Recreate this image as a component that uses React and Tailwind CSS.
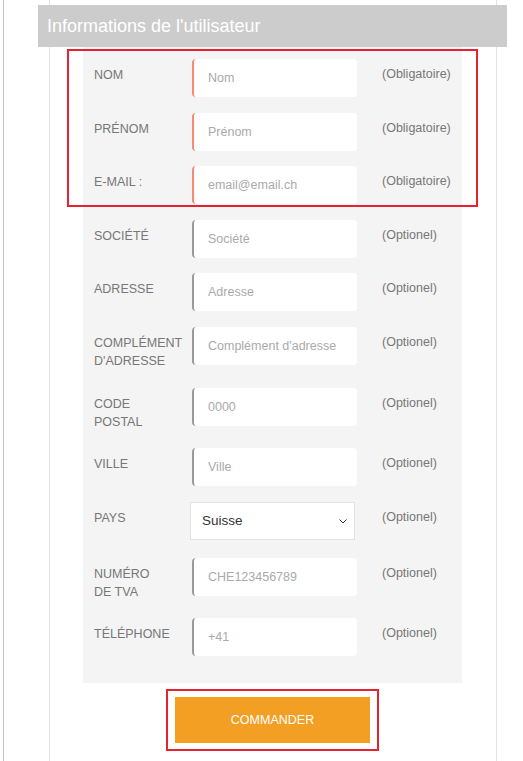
import { useState } from "react";

const requiredFields = [
  { label: ["NOM"], placeholder: "Nom" },
  { label: ["PRÉNOM"], placeholder: "Prénom" },
  { label: ["E-MAIL :"], placeholder: "email@email.ch" },
];

const optionalFields = [
  { label: ["SOCIÉTÉ"], placeholder: "Société" },
  { label: ["ADRESSE"], placeholder: "Adresse" },
  { label: ["COMPLÉMENT", "D'ADRESSE"], placeholder: "Complément d'adresse" },
  { label: ["CODE", "POSTAL"], placeholder: "0000" },
  { label: ["VILLE"], placeholder: "Ville" },
];

const lastFields = [
  { label: ["NUMÉRO", "DE TVA"], placeholder: "CHE123456789" },
  { label: ["TÉLÉPHONE"], placeholder: "+41" },
];

const Label = ({ lines }) => (
  <div className="w-[98px] shrink-0 pt-[7px] pb-[2px] leading-[18px] text-[#777]">
    {lines.map((l) => (
      <div key={l}>{l}</div>
    ))}
  </div>
);

const Note = ({ required }) => (
  <div className="ml-[25px] pt-[6px] leading-[18px] text-[#777]">
    {required ? "(Obligatoire)" : "(Optionel)"}
  </div>
);

const Field = ({ field, required }) => (
  <div className="flex items-start mb-[15.6px]">
    <Label lines={field.label} />
    <input
      type="text"
      placeholder={field.placeholder}
      className={`w-[165px] h-[38px] shrink-0 rounded-[4px] bg-white border-l-2 pl-[14px] text-[#333] outline-none placeholder:text-[#aaa] ${
        required ? "border-[#f58a78]" : "border-[#9a9a9a]"
      }`}
    />
    <Note required={required} />
  </div>
);

export default function App() {
  const [pays, setPays] = useState("Suisse");

  return (
    <div
      className="h-[761px] bg-white pl-[3px] text-[12.5px]"
      style={{ fontFamily: '"Liberation Sans", Arial, sans-serif' }}
    >
      <div className="h-full border-l border-[#c2c2c2]">
        <div className="ml-[45px] w-[448px] h-full border-x border-[#e4e4e4] pt-[5px]">
          <div className="-ml-[12px] -mr-[11px] h-[42px] bg-[#cccccc] pl-[9px] flex items-center text-[18px] text-white">
            Informations de l'utilisateur
          </div>

          <div className="relative ml-[33px] w-[379px] bg-[#f4f4f4] pl-[11px] pt-[12px] pb-[11px]">
            {/* annotation box */}
            <div className="absolute top-[2px] -left-[16px] w-[411px] h-[158px] border-2 border-[#e5222d] pointer-events-none" />

            {requiredFields.map((f) => (
              <Field key={f.placeholder} field={f} required />
            ))}
            {optionalFields.map((f) => (
              <Field key={f.placeholder} field={f} />
            ))}

            <div className="flex items-start mb-[18px]">
              <Label lines={["PAYS"]} />
              <div className="relative -ml-[2px] shrink-0">
                <select
                  value={pays}
                  onChange={(e) => setPays(e.target.value)}
                  className="appearance-none w-[165px] h-[38px] bg-white border border-[#e2e2e2] pl-[11px] text-[13.5px] text-[#333] outline-none"
                >
                  <option>Suisse</option>
                  <option>France</option>
                  <option>Allemagne</option>
                </select>
                <svg
                  className="absolute right-[8px] top-[17px] pointer-events-none"
                  width="8"
                  height="5"
                  viewBox="0 0 8 5"
                  fill="none"
                >
                  <path d="M0.5 0.5L4 4L7.5 0.5" stroke="#333" strokeWidth="1" />
                </svg>
              </div>
              <div className="ml-[27px] pt-[6px] leading-[18px] text-[#777]">(Optionel)</div>
            </div>

            {lastFields.map((f) => (
              <Field key={f.placeholder} field={f} />
            ))}
          </div>

          <div className="flex justify-center mt-[6px] -ml-[1px]">
            <div className="border-2 border-[#e5222d] px-[7px] py-[6px]">
              <button className="w-[195px] h-[46px] bg-[#f39f24] text-white text-[12.5px]">
                COMMANDER
              </button>
            </div>
          </div>
        </div>
      </div>
    </div>
  );
}
